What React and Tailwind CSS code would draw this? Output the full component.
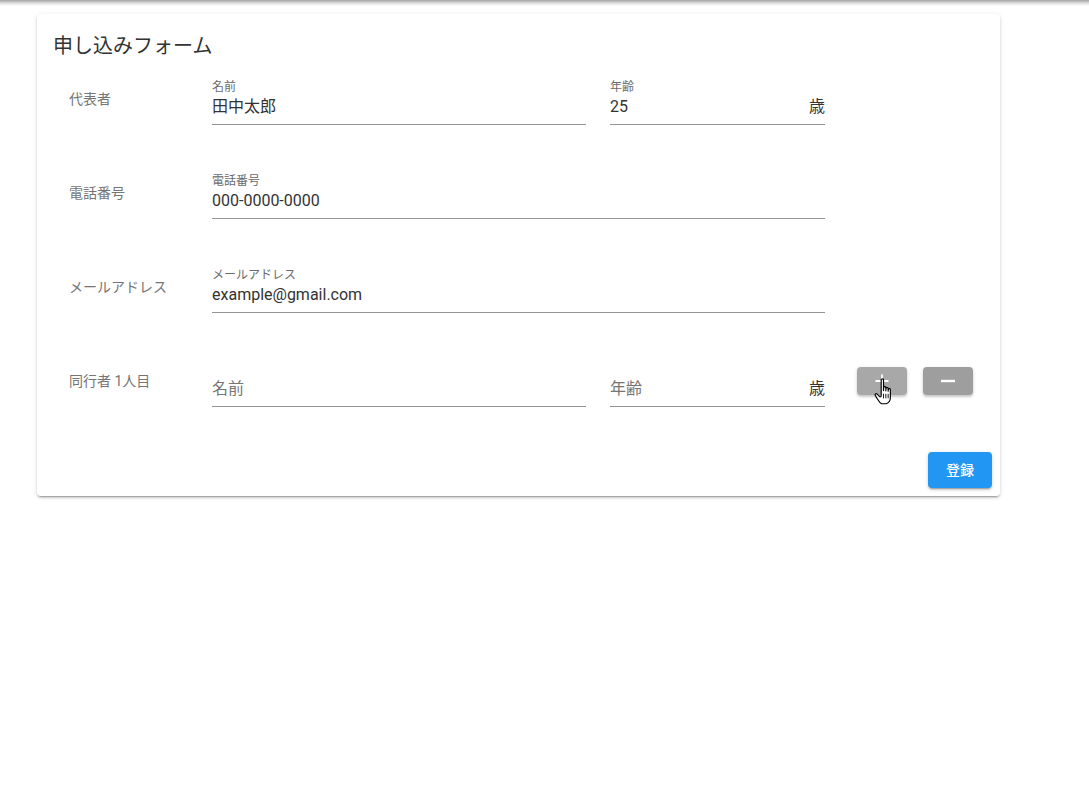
import React from 'react';

const font = { fontFamily: 'Roboto, "Noto Sans CJK JP", sans-serif' };

const Field = ({ label, value, placeholder, suffix, width }) => (
  <div className={`${width} shrink-0 border-b border-[#949494] pb-[5px]`}>
    <div className="h-4 text-[12px] leading-4 text-[#6b6b6b]">{label}</div>
    <div className="flex h-6 items-center justify-between text-[16px] leading-6">
      {value ? (
        <span className="text-[#333333]">{value}</span>
      ) : (
        <span className="text-[#757575]">{placeholder}</span>
      )}
      {suffix && <span className="text-[#333333]">{suffix}</span>}
    </div>
  </div>
);

const Row = ({ title, children }) => (
  <div className="flex h-[46px]">
    <div className="w-[143px] shrink-0 pt-[10px] text-[14px] leading-5 text-[#757575]">{title}</div>
    {children}
  </div>
);

const HandCursor = () => (
  <svg width="26" height="31" viewBox="0 0 20 24" className="pointer-events-none absolute left-[17px] top-[10px]">
    <path
      d="M5.5 2.2c0-1 1.8-1 1.8 0v8.3l.1-2.4c0-.9 1.7-.9 1.7 0v2.6l.1-1.8c0-.9 1.7-.9 1.7 0v2.1l.1-1.3c0-.9 1.6-.9 1.6 0v6.1c0 2.3-1.3 4.2-3.3 4.9H5.8C4.3 20 3.6 18.6 2.6 17L.9 14.2c-.5-.8.6-1.7 1.3-1.1l1.9 1.9c.6.6 1.4.3 1.4-.5V2.2z"
      fill="white"
      stroke="black"
      strokeWidth="0.9"
      strokeLinejoin="round"
    />
    <path d="M7.3 13v3.5M9.1 13v3.5M10.9 13v3.5" stroke="black" strokeWidth="0.7" />
  </svg>
);

const btnShadow = 'shadow-[0_2px_2px_0_rgba(0,0,0,0.14),0_1px_4px_0_rgba(0,0,0,0.12)]';

export default function App() {
  return (
    <div className="min-h-screen bg-white" style={font}>
      <div className="h-[6px] bg-gradient-to-b from-[#a3a3a3] via-[#dcdcdc] to-white" />
      <div className="ml-[37px] mt-[8px] w-[963px] rounded bg-white shadow-[0_3px_1px_-2px_rgba(0,0,0,0.2),0_2px_2px_0_rgba(0,0,0,0.14),0_1px_5px_0_rgba(0,0,0,0.12)]">
        <div className="px-4 pt-4 text-[20px] leading-8 text-[#333333]">申し込みフォーム</div>

        <div className="mt-[17px] flex flex-col gap-[48px] px-8">
          <Row title="代表者">
            <Field label="名前" value="田中太郎" width="w-[374px]" />
            <div className="ml-6 shrink-0">
              <Field label="年齢" value="25" suffix="歳" width="w-[215px]" />
            </div>
          </Row>
          <Row title="電話番号">
            <Field label="電話番号" value="000-0000-0000" width="w-[613px]" />
          </Row>
          <Row title="メールアドレス">
            <Field label="メールアドレス" value="example@gmail.com" width="w-[613px]" />
          </Row>
          <Row title="同行者 1人目">
            <Field placeholder="名前" width="w-[374px]" />
            <div className="ml-6 shrink-0">
              <Field placeholder="年齢" suffix="歳" width="w-[215px]" />
            </div>
            <button className={`relative ml-8 mt-[6px] flex h-[28px] w-[50px] shrink-0 items-center justify-center rounded bg-[#a8a8a8] ${btnShadow}`}>
              <svg width="14" height="14" viewBox="0 0 14 14">
                <path d="M7 0.5v13M0.5 7h13" stroke="white" strokeWidth="1.8" />
              </svg>
              <HandCursor />
            </button>
            <button className={`ml-4 mt-[6px] flex h-[28px] w-[50px] shrink-0 items-center justify-center rounded bg-[#9e9e9e] ${btnShadow}`}>
              <svg width="16" height="16" viewBox="0 0 16 16">
                <path d="M1 8h14" stroke="white" strokeWidth="2.4" />
              </svg>
            </button>
          </Row>
        </div>

        <div className="mt-[37px] flex justify-end p-2">
          <button className="h-9 w-16 rounded bg-[#2196f3] text-[14px] font-medium text-white shadow-[0_3px_1px_-2px_rgba(0,0,0,0.2),0_2px_2px_0_rgba(0,0,0,0.14),0_1px_5px_0_rgba(0,0,0,0.12)]">
            登録
          </button>
        </div>
      </div>
    </div>
  );
}
